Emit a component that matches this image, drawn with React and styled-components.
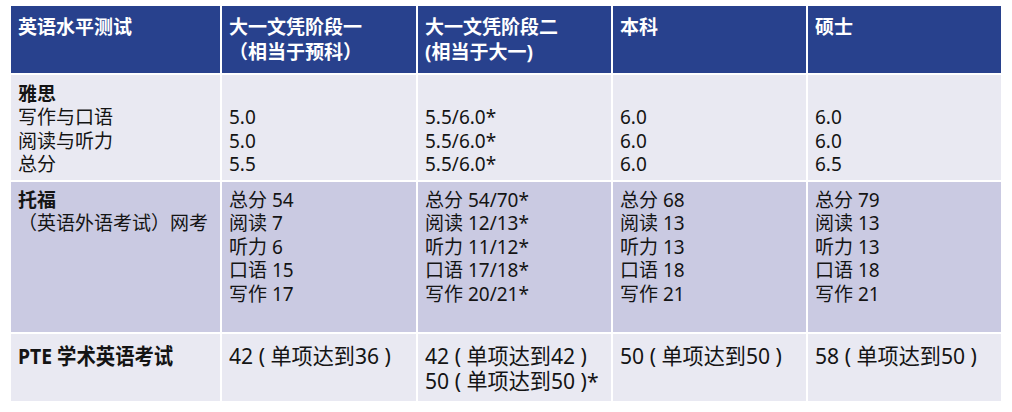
import React from 'react';
import styled, { createGlobalStyle } from 'styled-components';

const GlobalStyle = createGlobalStyle`
  html, body {
    margin: 0;
    padding: 0;
    background: #ffffff;
  }
`;

const Page = styled.div`
  width: 1012px;
  height: 412px;
  padding: 6px 0 0 11px;
  box-sizing: border-box;
  background: #ffffff;
`;

const Table = styled.div`
  display: grid;
  grid-template-columns: 209px 194px 193px 193px 193px;
  grid-template-rows: 67px 105px 150px 67px;
  gap: 2px;
  width: max-content;
  font-family: "Noto Sans", "Noto Sans CJK SC", sans-serif;
  font-size: 19px;
  color: #141414;
`;

const HeadCell = styled.div`
  background: #28418d;
  color: #ffffff;
  font-weight: 700;
  line-height: 25px;
  padding: 9px 7px 0 7px;
  white-space: nowrap;
`;

const Cell = styled.div`
  background: ${props => props.tone === 'dark' ? '#cacae2' : '#e9e9f2'};
  padding: ${props => props.pad || '8px'} 7px 0 7px;
  line-height: 23.4px;
  white-space: nowrap;
  overflow: hidden;
`;

const Line = styled.div`
  min-height: 23.4px;
  font-weight: ${props => props.bold ? 700 : 400};
`;

const Narrow = styled.div`
  display: inline-block;
  font-size: 22px;
  line-height: 23px;
  transform: scaleX(${props => props.bold ? 0.88 : 0.96});
  transform-origin: left center;
  font-weight: ${props => props.bold ? 700 : 400};
`;

const headers = [
  ['英语水平测试'],
  ['大一文凭阶段一', '（相当于预科）'],
  ['大一文凭阶段二', '(相当于大一)'],
  ['本科'],
  ['硕士'],
];

const rows = [
  {
    tone: 'light',
    pad: '8px',
    cells: [
      [{ t: '雅思', bold: true }, '写作与口语', '阅读与听力', '总分'],
      ['', '5.0', '5.0', '5.5'],
      ['', '5.5/6.0*', '5.5/6.0*', '5.5/6.0*'],
      ['', '6.0', '6.0', '6.0'],
      ['', '6.0', '6.0', '6.5'],
    ],
  },
  {
    tone: 'dark',
    pad: '7px',
    cells: [
      [{ t: '托福', bold: true }, '（英语外语考试）网考'],
      ['总分 54', '阅读 7', '听力 6', '口语 15', '写作 17'],
      ['总分 54/70*', '阅读 12/13*', '听力 11/12*', '口语 17/18*', '写作 20/21*'],
      ['总分 68', '阅读 13', '听力 13', '口语 18', '写作 21'],
      ['总分 79', '阅读 13', '听力 13', '口语 18', '写作 21'],
    ],
  },
];

const pte = [
  [{ t: 'PTE 学术英语考试', bold: true }],
  ['42 ( 单项达到36 )'],
  ['42 ( 单项达到42 )', '50 ( 单项达到50 )*'],
  ['50 ( 单项达到50 )'],
  ['58 ( 单项达到50 )'],
];

const asLine = (l) => (typeof l === 'string' ? { t: l, bold: false } : l);

const App = () => (
  <Page>
    <GlobalStyle />
    <Table>
      {headers.map((h, i) => (
        <HeadCell key={'h' + i}>
          {h.map((t) => <div key={t}>{t}</div>)}
        </HeadCell>
      ))}
      {rows.map((row, r) =>
        row.cells.map((lines, c) => (
          <Cell key={r + '-' + c} tone={row.tone} pad={row.pad}>
            {lines.map(asLine).map((l, k) => (
              <Line key={k} bold={l.bold}>{l.t}</Line>
            ))}
          </Cell>
        ))
      )}
      {pte.map((lines, c) => (
        <Cell key={'p' + c} tone="light" pad="10px">
          {lines.map(asLine).map((l, k) => (
            <div key={k}>
              <Narrow bold={l.bold}>{l.t}</Narrow>
            </div>
          ))}
        </Cell>
      ))}
    </Table>
  </Page>
);

export default App;
